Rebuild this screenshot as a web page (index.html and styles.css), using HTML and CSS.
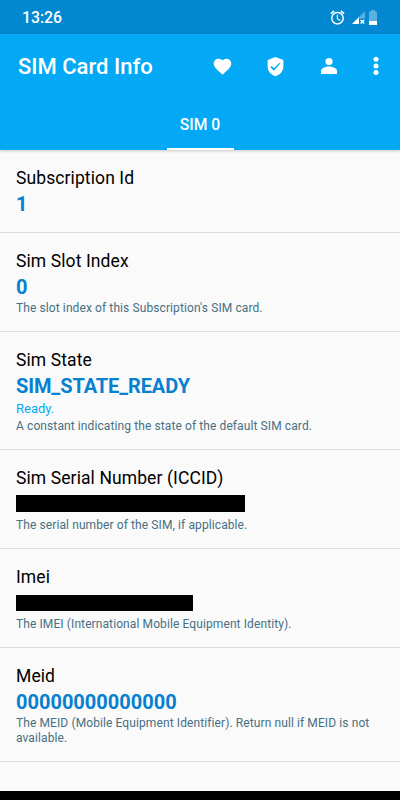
FILE: index.html
```html
<!DOCTYPE html>
<html lang="en">
<head>
<meta charset="utf-8">
<title>SIM Card Info</title>
<link rel="stylesheet" href="styles.css">
</head>
<body>
<div class="status">
  <span class="clock">13:26</span>
  <div class="status-icons">
    <svg class="alarm" viewBox="0 0 24 24"><path d="M22 5.720l-4.600-3.860-1.290 1.530 4.600 3.860L22 5.720zM7.880 3.390L6.600 1.860 2 5.710l1.290 1.530 4.590-3.850zM12.500 8H11v6l4.750 2.850.75-1.230-4-2.370V8zM12 4c-4.970 0-9 4.030-9 9s4.020 9 9 9c4.970 0 9-4.030 9-9s-4.030-9-9-9zm0 16c-3.870 0-7-3.130-7-7s3.130-7 7-7 7 3.130 7 7-3.130 7-7 7z"/></svg>
    <svg class="signal" viewBox="0 0 13 13"><path class="dim" d="M13 0v7.500H7V6z"/><path d="M0 13L7 6V13z"/><path class="cross" d="M8.600 8.900l3.600 3.600M12.200 8.900l-3.600 3.600"/></svg>
    <svg class="battery" viewBox="0 0 8 15"><path class="dim" d="M2 0h4v1.500h2V11H0V1.500h2z"/><path d="M0 11h8v4H0z"/></svg>
  </div>
</div>
<header class="header">
  <div class="toolbar">
    <h1 class="app-title">SIM Card Info</h1>
    <div class="actions">
      <svg viewBox="0 0 24 24"><path d="M12 21.350l-1.450-1.320C5.400 15.360 2 12.280 2 8.500 2 5.420 4.420 3 7.500 3c1.740 0 3.410.81 4.500 2.090C13.090 3.810 14.760 3 16.500 3 19.580 3 22 5.420 22 8.500c0 3.780-3.400 6.860-8.550 11.540L12 21.350z"/></svg>
      <svg viewBox="0 0 24 24"><path d="M12 1L3 4.500V12c0 5.300 3.840 9.800 9 11 5.160-1.200 9-5.700 9-11V4.500L12 1zm-1.800 15.800l-4-4 1.410-1.410 2.590 2.580 6.090-6.090L17.700 8.300l-7.500 8.500z"/></svg>
      <svg class="person" viewBox="0 0 24 24"><circle cx="12" cy="7.500" r="3.600"/><path d="M12 12.400c-3.500 0-8 1.500-8 4.600v3h16v-3c0-3.100-4.500-4.600-8-4.600z"/></svg>
      <svg class="more" viewBox="0 0 6 20"><circle cx="3" cy="3.200" r="2.500"/><circle cx="3" cy="9.900" r="2.500"/><circle cx="3" cy="16.600" r="2.500"/></svg>
    </div>
  </div>
  <div class="tabs"><div class="tab">SIM 0</div></div>
</header>
<main class="list">
  <section class="row"><h2 class="name">Subscription Id</h2><div class="value">1</div></section>
  <section class="row"><h2 class="name">Sim Slot Index</h2><div class="value">0</div><p class="desc">The slot index of this Subscription's SIM card.</p></section>
  <section class="row"><h2 class="name">Sim State</h2><div class="value state">SIM_STATE_READY</div><p class="note">Ready.</p><p class="desc">A constant indicating the state of the default SIM card.</p></section>
  <section class="row"><h2 class="name">Sim Serial Number (ICCID)</h2><div class="value"><div class="redacted iccid"></div></div><p class="desc">The serial number of the SIM, if applicable.</p></section>
  <section class="row"><h2 class="name">Imei</h2><div class="value"><div class="redacted imei"></div></div><p class="desc">The IMEI (International Mobile Equipment Identity).</p></section>
  <section class="row"><h2 class="name">Meid</h2><div class="value">00000000000000</div><p class="desc">The MEID (Mobile Equipment Identifier). Return null if MEID is not available.</p></section>
</main>
<div class="navbar"></div>
</body>
</html>
```
FILE: styles.css
```css
* { box-sizing: border-box; margin: 0; padding: 0; }
body {
  width: 400px;
  height: 800px;
  display: flex;
  flex-direction: column;
  overflow: hidden;
  background: #fafafa;
  font-family: Roboto, "Liberation Sans", sans-serif;
}
svg { display: block; fill: #fff; }
.status {
  flex: none;
  height: 34px;
  padding: 1px 23px 0 22px;
  display: flex;
  align-items: center;
  justify-content: space-between;
  background: #0288d1;
  color: #fff;
}
.clock { padding-top: 1px; font-size: 15.8px; font-weight: 500; line-height: 20px; }
.status-icons { display: flex; align-items: center; }
.alarm { width: 17px; height: 17px; }
.signal { width: 13px; height: 13px; margin: 0 4px 0 6px; }
.battery { width: 8px; height: 15px; }
.dim { fill-opacity: .35; }
.cross { fill: none; stroke: #fff; stroke-width: 1.4; }
.header {
  flex: none;
  height: 116px;
  background: #03a9f4;
  color: #fff;
  box-shadow: 0 1px 3px rgba(0, 0, 0, .2);
}
.toolbar {
  height: 64px;
  padding: 0 21.5px 0 18px;
  display: flex;
  align-items: center;
  justify-content: space-between;
}
.app-title { font-size: 22px; font-weight: 500; line-height: 28px; padding-top: 1px; }
.actions { display: flex; align-items: center; gap: 32px; }
.actions svg { width: 21px; height: 21px; }
.actions .person { width: 24px; height: 24px; margin-left: -1px; }
.actions .more { width: 6px; height: 20px; margin-left: -.5px; }
.tabs { height: 52px; display: flex; justify-content: center; }
.tab {
  width: 67px;
  border-bottom: 2px solid #fff;
  font-size: 15.7px;
  font-weight: 500;
  line-height: 53px;
  text-align: center;
}
.list { flex: 1; }
.row {
  padding: 16px 16px 15px;
  border-bottom: 1px solid #dedede;
}
.name { color: #000; font-size: 17.5px; font-weight: 400; line-height: 24px; letter-spacing: .1px; }
.value { height: 27px; padding-top: 1px; color: #0680d0; font-size: 20px; font-weight: 700; line-height: 27px; }
.value + p { margin-top: 1px; }
.state { letter-spacing: -.1px; }
.note { margin-bottom: 2px; color: #03a9f4; font-size: 13px; line-height: 17px; }
.desc { color: #467083; font-size: 12px; line-height: 15px; letter-spacing: .1px; }
.redacted { height: 16px; margin-top: 5px; background: #000; }
.iccid { width: 229px; height: 17px; margin-top: 4px; }
.imei { width: 177px; }
.navbar { flex: none; height: 9px; background: #000; }
```
